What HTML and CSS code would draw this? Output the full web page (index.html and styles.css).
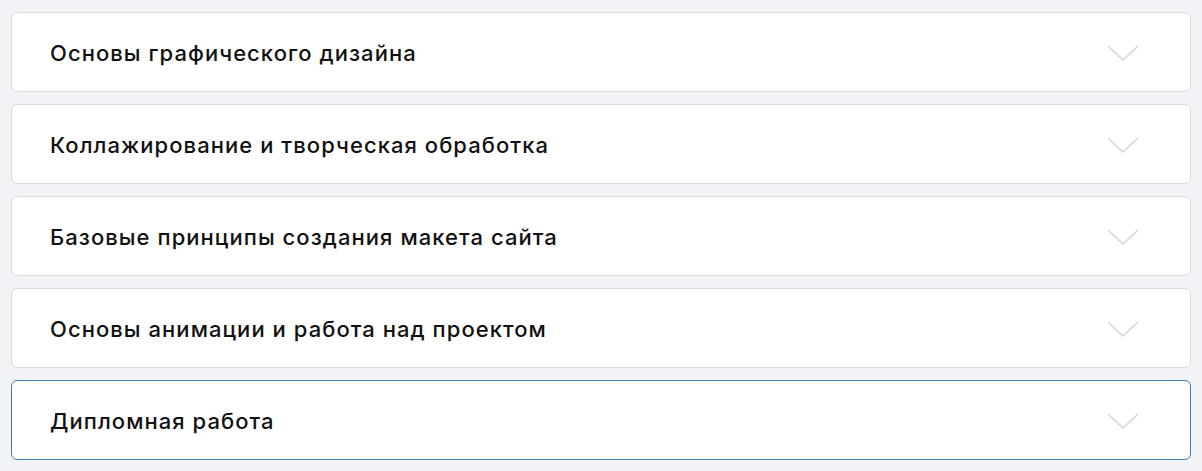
FILE: index.html
```html
<!DOCTYPE html>
<html lang="ru">
<head>
  <meta charset="UTF-8">
  <title>Программа курса</title>
  <link rel="stylesheet" href="styles.css">
</head>
<body>
  <div class="modules">
    <div class="module">
      <span class="module-title">Основы графического дизайна</span>
      <svg class="chevron" viewBox="0 0 32 16"><path d="M1 1 L16 15 L31 1"/></svg>
    </div>
    <div class="module">
      <span class="module-title">Коллажирование и творческая обработка</span>
      <svg class="chevron" viewBox="0 0 32 16"><path d="M1 1 L16 15 L31 1"/></svg>
    </div>
    <div class="module">
      <span class="module-title">Базовые принципы создания макета сайта</span>
      <svg class="chevron" viewBox="0 0 32 16"><path d="M1 1 L16 15 L31 1"/></svg>
    </div>
    <div class="module">
      <span class="module-title">Основы анимации и работа над проектом</span>
      <svg class="chevron" viewBox="0 0 32 16"><path d="M1 1 L16 15 L31 1"/></svg>
    </div>
    <div class="module active">
      <span class="module-title">Дипломная работа</span>
      <svg class="chevron" viewBox="0 0 32 16"><path d="M1 1 L16 15 L31 1"/></svg>
    </div>
  </div>
</body>
</html>
```

FILE: styles.css
```css
body {
  margin: 0;
  padding: 12px 11px;
  background-color: #f2f3f7;
  font-family: Inter, "Noto Sans", Arial, sans-serif;
}

.modules {
  display: flex;
  flex-direction: column;
  gap: 12px;
}

.module {
  box-sizing: border-box;
  height: 80px;
  display: flex;
  align-items: center;
  justify-content: space-between;
  padding: 2px 51px 0 38px;
  background-color: #fff;
  border: 1px solid #dadbdf;
  border-radius: 6px;
  cursor: pointer;
}

.module.active {
  border-color: #3f7ab5;
}

.module-title {
  font-size: 22px;
  font-weight: 500;
  color: #111;
  letter-spacing: 1.05px;
}

.chevron {
  width: 32px;
  height: 16px;
  fill: none;
  stroke: #d6d6d8;
  stroke-width: 1.6;
}
```
